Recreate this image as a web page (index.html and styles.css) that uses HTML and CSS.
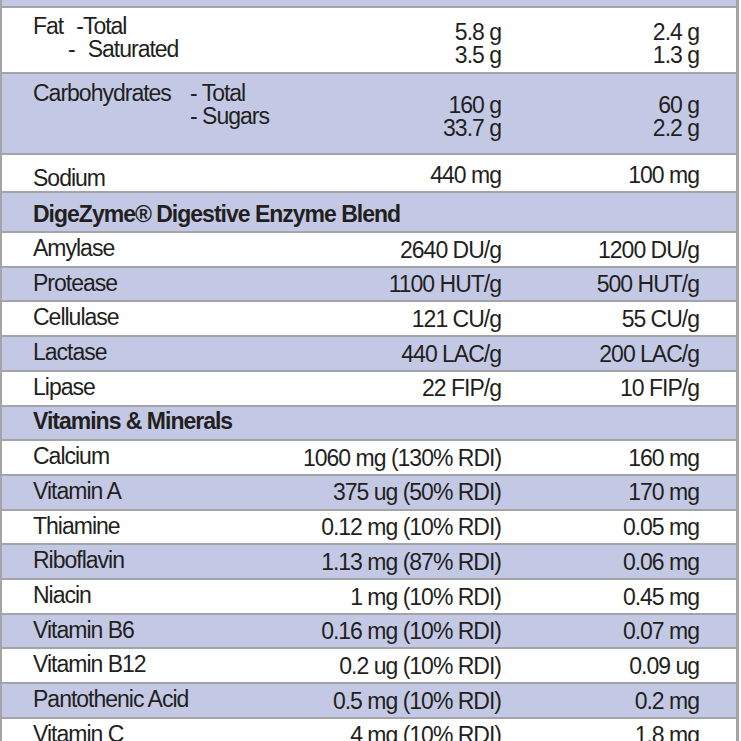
FILE: index.html
```html
<!DOCTYPE html>
<html lang="en">
<head>
<meta charset="utf-8">
<title>Nutrition Information</title>
<link rel="stylesheet" href="styles.css">
</head>
<body>
<div class="table">
  <div class="row lav strip"></div>

  <div class="row fat">
    <div class="label multi">
      <div>Fat<span class="gap-a">-Total</span></div>
      <div class="ind-a">-<span class="gap-b">Saturated</span></div>
    </div>
    <div class="val multi"><div>5.8 g</div><div>3.5 g</div></div>
    <div class="val multi"><div>2.4 g</div><div>1.3 g</div></div>
  </div>

  <div class="row lav carbs">
    <div class="label multi carb-grid">
      <div>Carbohydrates</div>
      <div><div>- Total</div><div>- Sugars</div></div>
    </div>
    <div class="val multi"><div>160 g</div><div>33.7 g</div></div>
    <div class="val multi"><div>60 g</div><div>2.2 g</div></div>
  </div>

  <div class="row sodium">
    <div class="label">Sodium</div>
    <div class="val">440 mg</div>
    <div class="val">100 mg</div>
  </div>

  <div class="row lav head head-big">
    <div class="title">DigeZyme® Digestive Enzyme Blend</div>
  </div>

  <div class="row std">
    <div class="label">Amylase</div><div class="val">2640 DU/g</div><div class="val">1200 DU/g</div>
  </div>
  <div class="row std lav">
    <div class="label">Protease</div><div class="val">1100 HUT/g</div><div class="val">500 HUT/g</div>
  </div>
  <div class="row std">
    <div class="label">Cellulase</div><div class="val">121 CU/g</div><div class="val">55 CU/g</div>
  </div>
  <div class="row std lav">
    <div class="label">Lactase</div><div class="val">440 LAC/g</div><div class="val">200 LAC/g</div>
  </div>
  <div class="row std">
    <div class="label">Lipase</div><div class="val">22 FIP/g</div><div class="val">10 FIP/g</div>
  </div>

  <div class="row std lav head head-small">
    <div class="title">Vitamins &amp; Minerals</div>
  </div>

  <div class="row std">
    <div class="label">Calcium</div><div class="val">1060 mg (130% RDI)</div><div class="val">160 mg</div>
  </div>
  <div class="row std lav">
    <div class="label">Vitamin A</div><div class="val">375 ug (50% RDI)</div><div class="val">170 mg</div>
  </div>
  <div class="row std">
    <div class="label">Thiamine</div><div class="val">0.12 mg (10% RDI)</div><div class="val">0.05 mg</div>
  </div>
  <div class="row std lav">
    <div class="label">Riboflavin</div><div class="val">1.13 mg (87% RDI)</div><div class="val">0.06 mg</div>
  </div>
  <div class="row std">
    <div class="label">Niacin</div><div class="val">1 mg (10% RDI)</div><div class="val">0.45 mg</div>
  </div>
  <div class="row std lav">
    <div class="label">Vitamin B6</div><div class="val">0.16 mg (10% RDI)</div><div class="val">0.07 mg</div>
  </div>
  <div class="row std">
    <div class="label">Vitamin B12</div><div class="val">0.2 ug (10% RDI)</div><div class="val">0.09 ug</div>
  </div>
  <div class="row std lav">
    <div class="label">Pantothenic Acid</div><div class="val">0.5 mg (10% RDI)</div><div class="val">0.2 mg</div>
  </div>
  <div class="row std">
    <div class="label">Vitamin C</div><div class="val">4 mg (10% RDI)</div><div class="val">1.8 mg</div>
  </div>
</div>
</body>
</html>
```

FILE: styles.css
```css
html, body {
  margin: 0;
  padding: 0;
  background: #ffffff;
}

body {
  font-family: "Liberation Sans", Arial, sans-serif;
  font-size: 23px;
  letter-spacing: -1px;
  color: #231f20;
  overflow: hidden;
}

.table {
  width: 739px;
  box-sizing: border-box;
  border-left: 2px solid #a3a3a8;
  border-right: 3px solid #a3a3a8;
}

.row {
  display: grid;
  grid-template-columns: 1fr 198px 198px;
  box-sizing: border-box;
  padding: 0 37px 0 31px;
  border-bottom: 2px solid #a3a3a8;
  background: #ffffff;
  line-height: 23px;
}

.row.lav {
  background: #c3c9e5;
}

.strip {
  height: 8px;
}

.label {
  white-space: nowrap;
}

.val {
  text-align: right;
  white-space: nowrap;
}

.multi {
  line-height: 22.5px;
}

/* Fat row */
.fat {
  height: 66px;
}
.fat .label { padding-top: 7px; }
.fat .val { padding-top: 13px; }
.gap-a { margin-left: 13px; }
.ind-a { padding-left: 35px; }
.gap-b { margin-left: 13px; }

/* Carbohydrates row */
.carbs {
  height: 81px;
}
.carbs .label { padding-top: 8px; }
.carbs .val { padding-top: 20px; }
.carb-grid {
  display: grid;
  grid-template-columns: 157px auto;
}

/* Sodium row */
.sodium {
  height: 38px;
}
.sodium .label { padding-top: 12px; }
.sodium .val { padding-top: 9px; }

/* Standard rows */
.std {
  height: 34.71px;
}
.std .label { padding-top: 4px; }
.std .val { padding-top: 5.5px; }

/* Section headers */
.head .title {
  grid-column: 1 / -1;
  font-weight: bold;
  white-space: nowrap;
}
.head-big {
  height: 40px;
}
.head-big .title { padding-top: 10px; }
.head-small .title { padding-top: 3px; }
```
